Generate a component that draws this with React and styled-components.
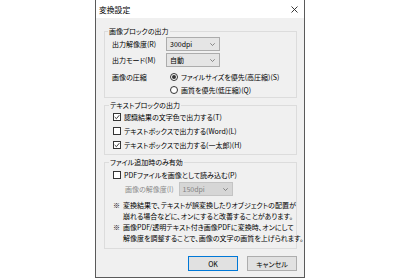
import styled, { createGlobalStyle } from 'styled-components';

const GlobalStyle = createGlobalStyle`
  body {
    margin: 0;
    background: #ffffff;
    font-family: "Noto Sans CJK JP", "Noto Sans", sans-serif;
    font-size: 7px;
    color: #000;
  }
`;

const Page = styled.div`
  display: flex;
  justify-content: center;
  height: 280px;
`;

const Dialog = styled.div`
  width: 210px;
  height: 278px;
  box-sizing: border-box;
  border: 1px solid #5a5a5a;
  border-top: none;
  display: flex;
  flex-direction: column;
  background: #f0f0f0;
`;

const TitleBar = styled.div`
  height: 18px;
  flex: none;
  background: #fff;
  display: flex;
  align-items: center;
  justify-content: space-between;
  padding: 0 6px 0 3px;
  font-size: 7.8px;
  font-feature-settings: "palt";
`;

const Body = styled.div`
  padding: 8px 7px 0 8px;
  display: flex;
  flex-direction: column;
  gap: 2px;
  font-feature-settings: "palt";
  line-height: 10px;
`;

const Group = styled.fieldset`
  margin: 0;
  min-width: 0;
  border: 1px solid #dcdcdc;
  padding: ${(p) => p.$pad || '2px 7px 4px 8px'};
  display: flex;
  flex-direction: column;
  gap: ${(p) => p.$gap || '4px'};
`;

const Legend = styled.legend`
  padding: 0 1px;
  margin-left: -4px;
  line-height: 10px;
`;

const FormGrid = styled.div`
  display: grid;
  grid-template-columns: 54px 1fr;
  row-gap: 2px;
  align-items: center;
`;

const FieldLabel = styled.span`
  white-space: nowrap;
  align-self: ${(p) => (p.$top ? 'start' : 'center')};
  padding-top: ${(p) => (p.$top ? '3px' : '0')};
  color: ${(p) => (p.$disabled ? '#8a8a8a' : '#000')};
`;

const RadioList = styled.div`
  display: flex;
  flex-direction: column;
  gap: 3px;
  margin-top: 3px;
  padding-left: 4px;
`;

const Select = styled.div`
  width: 54px;
  height: 14px;
  box-sizing: border-box;
  border: 1px solid ${(p) => (p.$disabled ? '#c4c4c4' : '#acacac')};
  background: ${(p) => (p.$disabled ? '#d6d6d6' : '#e5e5e5')};
  color: ${(p) => (p.$disabled ? '#838383' : '#000')};
  display: flex;
  align-items: center;
  justify-content: space-between;
  padding: 0 4px 0 3px;
`;

const Option = styled.label`
  display: flex;
  align-items: center;
  gap: 3px;
  height: 10px;
  white-space: nowrap;
`;

const RadioMark = styled.span`
  width: 8px;
  height: 8px;
  box-sizing: border-box;
  border: 1px solid #333;
  border-radius: 50%;
  background: #fff;
  display: flex;
  align-items: center;
  justify-content: center;
  flex: none;
  &::after {
    content: '';
    width: 4px;
    height: 4px;
    border-radius: 50%;
    background: ${(p) => (p.$on ? '#333' : 'transparent')};
  }
`;

const CheckMark = styled.span`
  width: 8px;
  height: 8px;
  box-sizing: border-box;
  border: 1px solid #333;
  background: #fff;
  display: flex;
  align-items: center;
  justify-content: center;
  flex: none;
`;

const IndentRow = styled.div`
  display: flex;
  align-items: center;
  gap: 5px;
  padding-left: 12px;
  margin-top: -2px;
`;

const Notes = styled.div`
  line-height: 11px;
`;

const Note = styled.p`
  margin: 0;
  display: grid;
  grid-template-columns: 10px 1fr;
  white-space: nowrap;
`;

const Buttons = styled.div`
  display: flex;
  justify-content: flex-end;
  gap: 9px;
  margin-top: 5px;
`;

const Button = styled.button`
  width: 50px;
  height: 15px;
  box-sizing: border-box;
  padding: 0;
  font: inherit;
  font-feature-settings: "palt";
  color: #000;
  background: #e1e1e1;
  border: 1px solid ${(p) => (p.$primary ? '#0078d7' : '#adadad')};
`;

function Chevron() {
  return (
    <svg width="5" height="3" viewBox="0 0 5 3">
      <path d="M0.3 0.3 L2.5 2.5 L4.7 0.3" fill="none" stroke="#6d6d6d" strokeWidth="0.8" />
    </svg>
  );
}

function CloseIcon() {
  return (
    <svg width="7" height="7" viewBox="0 0 7 7">
      <path d="M0.5 0.5 L6.5 6.5 M6.5 0.5 L0.5 6.5" stroke="#222" strokeWidth="0.9" />
    </svg>
  );
}

function Check({ on, children }) {
  return (
    <Option>
      <CheckMark>
        {on && (
          <svg width="6" height="6" viewBox="0 0 6 6">
            <path d="M0.7 3 L2.4 4.7 L5.3 1.2" fill="none" stroke="#222" strokeWidth="0.9" />
          </svg>
        )}
      </CheckMark>
      {children}
    </Option>
  );
}

function Radio({ on, children }) {
  return (
    <Option>
      <RadioMark $on={on} />
      {children}
    </Option>
  );
}

export default function App() {
  return (
    <Page>
      <GlobalStyle />
      <Dialog>
        <TitleBar>
          <span>変換設定</span>
          <CloseIcon />
        </TitleBar>
        <Body>
          <Group $pad="1px 7px 2px 7px">
            <Legend>画像ブロックの出力</Legend>
            <FormGrid>
              <FieldLabel>出力解像度(R)</FieldLabel>
              <Select>
                <span>300dpi</span>
                <Chevron />
              </Select>
              <FieldLabel>出力モード(M)</FieldLabel>
              <Select>
                <span>自動</span>
                <Chevron />
              </Select>
              <FieldLabel $top>画像の圧縮</FieldLabel>
              <RadioList>
                <Radio on>ファイルサイズを優先(高圧縮)(S)</Radio>
                <Radio>画質を優先(低圧縮)(Q)</Radio>
              </RadioList>
            </FormGrid>
          </Group>
          <Group>
            <Legend>テキストブロックの出力</Legend>
            <Check on>認識結果の文字色で出力する(T)</Check>
            <Check>テキストボックスで出力する(Word)(L)</Check>
            <Check on>テキストボックスで出力する(一太郎)(H)</Check>
          </Group>
          <Group $pad="3px 7px 4px 8px" $gap="4px">
            <Legend>ファイル追加時のみ有効</Legend>
            <Check>PDFファイルを画像として読み込む(P)</Check>
            <IndentRow>
              <FieldLabel $disabled>画像の解像度(I)</FieldLabel>
              <Select $disabled>
                <span>150dpi</span>
                <Chevron />
              </Select>
            </IndentRow>
            <Notes>
              <Note>
                <span>※</span>
                <span>
                  変換結果で、テキストが誤変換したりオブジェクトの配置が
                  <br />
                  崩れる場合などに、オンにすると改善することがあります。
                </span>
              </Note>
              <Note>
                <span>※</span>
                <span>
                  画像PDF/透明テキスト付き画像PDFに変換時、オンにして
                  <br />
                  解像度を調整することで、画像の文字の画質を上げられます。
                </span>
              </Note>
            </Notes>
          </Group>
          <Buttons>
            <Button $primary>OK</Button>
            <Button>キャンセル</Button>
          </Buttons>
        </Body>
      </Dialog>
    </Page>
  );
}
